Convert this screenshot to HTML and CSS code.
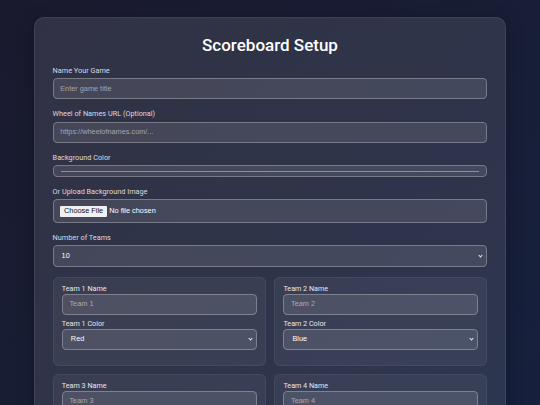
FILE: index.html
```html
<!DOCTYPE html>
<html lang="en">
<head>
<meta charset="utf-8">
<title>Scoreboard Setup</title>
<link rel="stylesheet" href="styles.css">
</head>
<body>
  <div class="setup-card">
    <h1 class="title">Scoreboard Setup</h1>

    <div class="form-group">
      <label class="label" for="game-name">Name Your Game</label>
      <input class="field" id="game-name" type="text" placeholder="Enter game title">
    </div>

    <div class="form-group">
      <label class="label" for="wheel-url">Wheel of Names URL (Optional)</label>
      <input class="field" id="wheel-url" type="text" placeholder="https://wheelofnames.com/...">
    </div>

    <div class="form-group">
      <label class="label" for="bg-color">Background Color</label>
      <input class="color-field" id="bg-color" type="color" value="#1a1a2e">
    </div>

    <div class="form-group">
      <label class="label" for="bg-image">Or Upload Background Image</label>
      <input class="file-field" id="bg-image" type="file">
    </div>

    <div class="form-group">
      <label class="label" for="team-count">Number of Teams</label>
      <div class="select-wrap">
        <select class="field select" id="team-count">
          <option>1</option><option>2</option><option>3</option><option>4</option><option>5</option>
          <option>6</option><option>7</option><option>8</option><option>9</option><option selected>10</option>
        </select>
      </div>
    </div>

    <div class="team-grid">
      <div class="team-card">
        <div class="team-group">
          <label class="team-label">Team 1 Name</label>
          <input class="field team-field" type="text" placeholder="Team 1">
        </div>
        <div class="team-group">
          <label class="team-label">Team 1 Color</label>
          <div class="select-wrap">
            <select class="field select team-field"><option selected>Red</option><option>Blue</option><option>Green</option><option>Yellow</option></select>
          </div>
        </div>
      </div>
      <div class="team-card">
        <div class="team-group">
          <label class="team-label">Team 2 Name</label>
          <input class="field team-field" type="text" placeholder="Team 2">
        </div>
        <div class="team-group">
          <label class="team-label">Team 2 Color</label>
          <div class="select-wrap">
            <select class="field select team-field"><option>Red</option><option selected>Blue</option><option>Green</option><option>Yellow</option></select>
          </div>
        </div>
      </div>
      <div class="team-card">
        <div class="team-group">
          <label class="team-label">Team 3 Name</label>
          <input class="field team-field" type="text" placeholder="Team 3">
        </div>
        <div class="team-group">
          <label class="team-label">Team 3 Color</label>
          <div class="select-wrap">
            <select class="field select team-field"><option>Red</option><option>Blue</option><option selected>Green</option><option>Yellow</option></select>
          </div>
        </div>
      </div>
      <div class="team-card">
        <div class="team-group">
          <label class="team-label">Team 4 Name</label>
          <input class="field team-field" type="text" placeholder="Team 4">
        </div>
        <div class="team-group">
          <label class="team-label">Team 4 Color</label>
          <div class="select-wrap">
            <select class="field select team-field"><option>Red</option><option>Blue</option><option>Green</option><option selected>Yellow</option></select>
          </div>
        </div>
      </div>
    </div>
  </div>
</body>
</html>
```

FILE: styles.css
```css
html, body {
  margin: 0;
  padding: 0;
}

body {
  min-height: 405px;
  background: linear-gradient(135deg, #1a1a2e 0%, #16213e 100%);
  font-family: Roboto, "Liberation Sans", sans-serif;
  color: #e6e7ee;
  padding-top: 17px;
  box-sizing: border-box;
}

.setup-card {
  width: 472px;
  margin: 0 auto;
  box-sizing: border-box;
  padding: 17.6px;
  background: rgba(255, 255, 255, 0.1);
  border: 1px solid rgba(255, 255, 255, 0.08);
  border-radius: 10px;
  box-shadow: 0 4px 18px rgba(0, 0, 0, 0.25);
}

.title {
  margin: -1px 0 11.5px;
  text-align: center;
  font-size: 17px;
  font-weight: 500;
  color: #ffffff;
  line-height: 20.6px;
}

.form-group {
  margin-bottom: 10.8px;
}

.label {
  display: block;
  font-size: 7.3px;
  line-height: 8.4px;
  margin-bottom: 3px;
  color: #d9dae1;
}

.field {
  display: block;
  width: 100%;
  box-sizing: border-box;
  padding: 5.5px 6.6px;
  border: 1px solid rgba(255, 255, 255, 0.28);
  border-radius: 4.4px;
  background: rgba(255, 255, 255, 0.1);
  color: #ffffff;
  font-family: "Liberation Sans", Arial, sans-serif;
  font-size: 7.33px;
  line-height: 8.4px;
  outline: none;
  margin: 0;
}

.field::placeholder {
  color: rgba(255, 255, 255, 0.5);
}

.select-wrap {
  position: relative;
}

.select {
  -webkit-appearance: none;
  appearance: none;
  padding-left: 8px;
}

.select option {
  color: #000000;
}

.select-wrap::after {
  content: "";
  position: absolute;
  right: 5px;
  top: 50%;
  width: 2px;
  height: 2px;
  margin-top: -2px;
  border-right: 1px solid #e8e9ef;
  border-bottom: 1px solid #e8e9ef;
  transform: rotate(45deg);
  pointer-events: none;
}

.color-field {
  display: block;
  width: 100%;
  height: 12px;
  box-sizing: border-box;
  padding: 5px 7px 5px;
  border: 1px solid rgba(255, 255, 255, 0.28);
  border-radius: 4.4px;
  background: rgba(255, 255, 255, 0.1);
  -webkit-appearance: none;
  appearance: none;
  margin: 0;
}

.color-field::-webkit-color-swatch-wrapper {
  padding: 0;
}

.color-field::-webkit-color-swatch {
  border: 0;
  border-top: 1px solid #8a8d9d;
  border-radius: 0;
}

.file-field {
  display: block;
  width: 100%;
  box-sizing: border-box;
  padding: 5.5px 6.6px;
  border: 1px solid rgba(255, 255, 255, 0.28);
  border-radius: 4.4px;
  background: rgba(255, 255, 255, 0.1);
  color: #ffffff;
  font-family: "Liberation Sans", Arial, sans-serif;
  font-size: 7.33px;
  line-height: 8.4px;
  margin: 0;
}

.file-field::file-selector-button {
  font: inherit;
  line-height: 8.4px;
  padding: 1.1px 3.9px;
  margin-right: 2.2px;
  border: 0;
  border-radius: 1px;
  background: #f0f0f0;
  color: #111111;
}

.team-grid {
  display: grid;
  grid-template-columns: 1fr 1fr;
  gap: 8.6px 8.25px;
}

.team-card {
  padding: 7px 8.25px 9.5px;
  background: rgba(255, 255, 255, 0.05);
  border: 1px solid rgba(255, 255, 255, 0.06);
  border-radius: 6px;
}

.team-group {
  margin-bottom: 5.5px;
}

.team-group:last-child {
  margin-bottom: 5.5px;
}

.team-label {
  display: block;
  font-size: 7.2px;
  line-height: 8.4px;
  color: #e6e7ee;
}

.team-field {
  padding-top: 5.3px;
  padding-bottom: 5.3px;
}
```
